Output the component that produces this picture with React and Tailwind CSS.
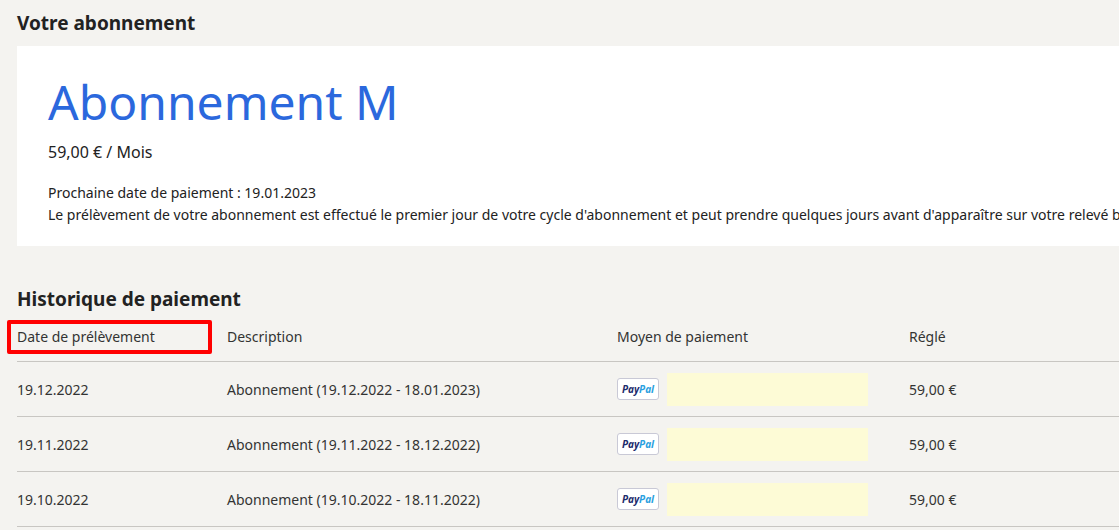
const rows = [
  ["19.12.2022", "Abonnement (19.12.2022 - 18.01.2023)"],
  ["19.11.2022", "Abonnement (19.11.2022 - 18.12.2022)"],
  ["19.10.2022", "Abonnement (19.10.2022 - 18.11.2022)"],
];

function PayPal() {
  return (
    <span className="inline-flex items-center justify-center w-[42px] h-[22px] rounded-[3px] border border-[#c9c9d6] bg-white text-[10px] font-bold italic leading-none">
      <span className="text-[#1b2a6b]">Pay</span>
      <span className="text-[#2aa0e0]">Pal</span>
    </span>
  );
}

export default function App() {
  return (
    <div className="w-[1119px] h-[530px] overflow-hidden bg-[#f4f3f0] text-[#222] font-['Liberation_Sans',Arial,sans-serif]">
      <div className="pl-[17px]">
        <h2 className="pt-[10px] text-[19px] font-bold leading-[26px]">Votre abonnement</h2>
        <div className="mt-[10px] bg-white w-[1120px] h-[200px] pl-[31px] pt-[28px]">
          <h1 className="text-[48px] leading-[56px] text-[#2b68dd]">Abonnement M</h1>
          <p className="mt-[10px] text-[16px]">59,00 € / Mois</p>
          <p className="mt-[18px] text-[14px] leading-[22px]">Prochaine date de paiement : 19.01.2023</p>
          <p className="text-[14px] leading-[22px] whitespace-nowrap">Le prélèvement de votre abonnement est effectué le premier jour de votre cycle d'abonnement et peut prendre quelques jours avant d'apparaître sur votre relevé bancaire.</p>
        </div>
        <h2 className="mt-[40px] text-[19px] font-bold leading-[26px]">Historique de paiement</h2>
        <div className="relative text-[14px] text-[#333]">
          <div className="absolute left-[-10px] top-[8px] w-[205px] h-[34px] border-[4px] border-[#ff0000] rounded-[2px]" />
          <div className="flex h-[50px] items-center border-b border-[#c8c6c2]">
            <span className="w-[210px]">Date de prélèvement</span>
            <span className="w-[390px]">Description</span>
            <span className="w-[292px]">Moyen de paiement</span>
            <span>Réglé</span>
          </div>
          {rows.map(([d, desc]) => (
            <div key={d} className="flex h-[55px] items-center border-b border-[#c8c6c2]">
              <span className="w-[210px]">{d}</span>
              <span className="w-[390px]">{desc}</span>
              <span className="w-[292px] flex items-center gap-[8px]">
                <PayPal />
                <span className="w-[201px] h-[33px] bg-[#fdfbd6]" />
              </span>
              <span>59,00 €</span>
            </div>
          ))}
        </div>
      </div>
    </div>
  );
}
